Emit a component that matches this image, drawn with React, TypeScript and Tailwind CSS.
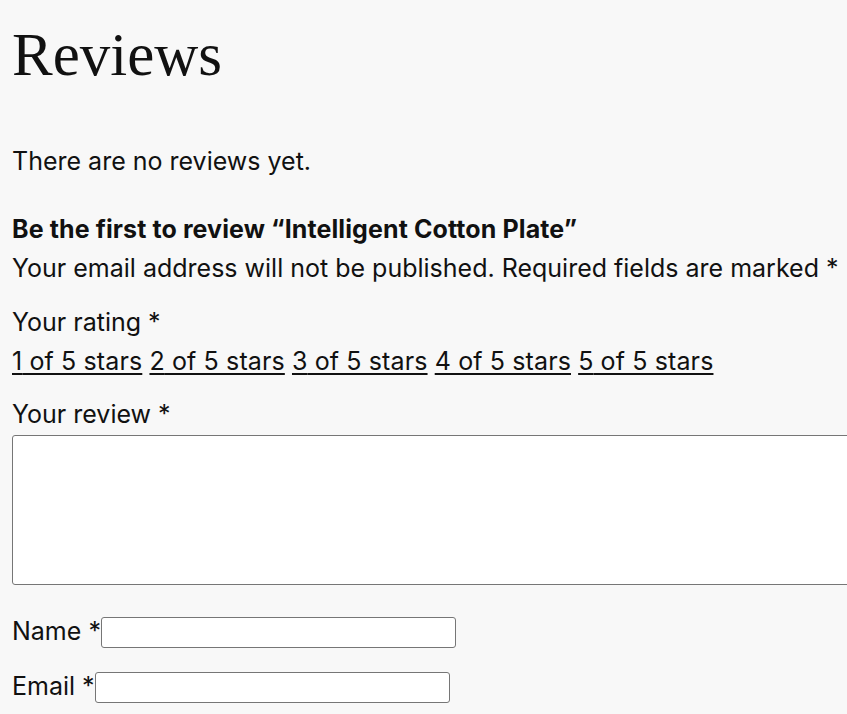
// Product reviews block — empty state with the review form.

const body = { fontFamily: "Inter, 'Noto Sans', sans-serif" };

const ratings = [1, 2, 3, 4, 5];

export default function App() {
  return (
    <div
      className="min-h-screen w-full overflow-hidden bg-[#f8f8f8] px-3 text-[#111]"
      style={body}
    >
      <h2
        className="pt-[19px] text-[61px] leading-[72px] font-normal"
        style={{ fontFamily: "'Liberation Serif', serif" }}
      >
        Reviews
      </h2>

      <p className="mt-[54px] text-[25px] leading-8">There are no reviews yet.</p>

      <div className="mt-9">
        <p className="text-[25px] leading-8 font-bold tracking-[0.1px]">
          Be the first to review “Intelligent Cotton Plate”
        </p>
        <p className="mt-[7px] text-[25px] leading-8 whitespace-nowrap">
          Your email address will not be published. Required fields are marked *
        </p>

        <div className="mt-[22px]">
          <label className="block text-[25px] leading-8">Your rating *</label>
          <p className="mt-[7px] text-[25px] leading-8 tracking-[0.12px]">
            {ratings.map((n) => (
              <span key={n}>
                <a href="#" className="underline decoration-2 underline-offset-[3px]">
                  {n} of 5 stars
                </a>{" "}
              </span>
            ))}
          </p>
        </div>

        <div className="mt-[21px]">
          <label className="block text-[25px] leading-8">Your review *</label>
          <textarea className="mt-[5px] block h-[150px] w-[calc(100%+40px)] rounded-[3px] border border-[#767676] bg-white" />
        </div>

        <div className="mt-[30px] flex items-start">
          <label className="text-[25px] leading-8">Name *</label>
          <input className="mt-[2px] h-[31px] w-[355px] rounded-[3px] border border-[#767676] bg-white" />
        </div>
        <div className="mt-[22px] flex items-start">
          <label className="text-[25px] leading-8">Email *</label>
          <input className="mt-[2px] h-[31px] w-[355px] rounded-[3px] border border-[#767676] bg-white" />
        </div>
      </div>
    </div>
  );
}
